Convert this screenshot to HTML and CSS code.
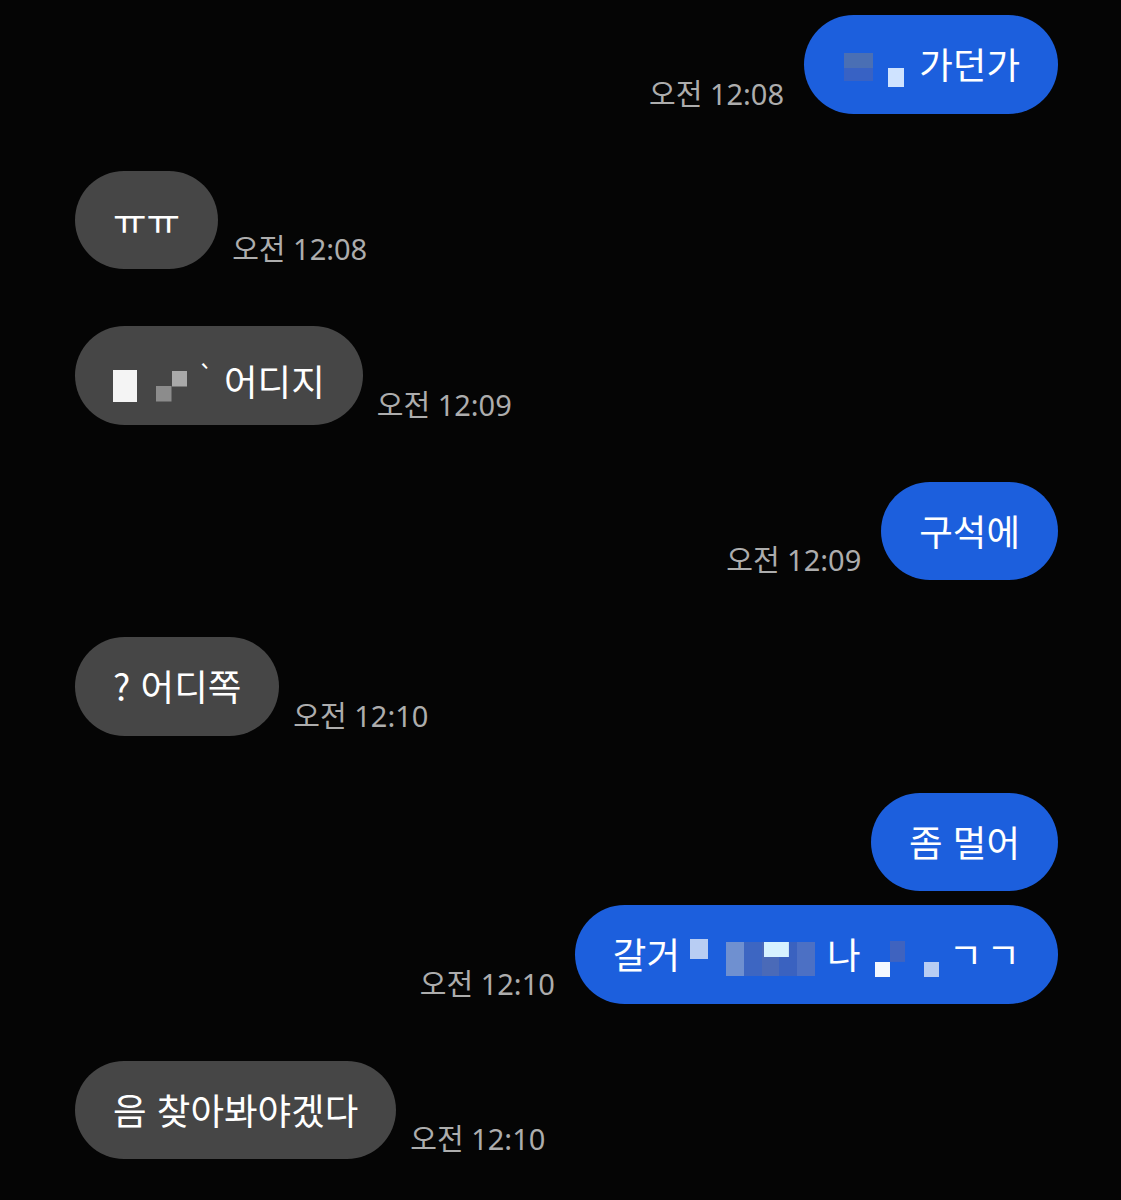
FILE: index.html
```html
<!DOCTYPE html>
<html lang="ko">
<head>
  <meta charset="UTF-8" />
  <meta name="viewport" content="width=device-width, initial-scale=1.0" />
  <title>Messages</title>
  <link rel="stylesheet" href="styles.css">
</head>
<body>
  <div class="chat">
    <div class="row sent">
      <span class="time">오전 12:08</span>
      <div class="bubble"><span class="mask m-slate"></span><span class="mask m-light"></span> 가던가</div>
    </div>

    <div class="row recv">
      <div class="bubble">ㅠㅠ</div>
      <span class="time">오전 12:08</span>
    </div>

    <div class="row recv">
      <div class="bubble"><span class="mask m-white"></span><span class="mask m-check"></span><span class="tick">`</span> 어디지</div>
      <span class="time">오전 12:09</span>
    </div>

    <div class="row sent">
      <span class="time">오전 12:09</span>
      <div class="bubble">구석에</div>
    </div>

    <div class="row recv">
      <div class="bubble">? 어디쪽</div>
      <span class="time">오전 12:10</span>
    </div>

    <div class="group">
      <div class="row sent">
        <div class="bubble">좀 멀어</div>
      </div>
      <div class="row sent">
        <span class="time">오전 12:10</span>
        <div class="bubble">갈거<span class="mask m-pale"></span><span class="mask m-strip"></span>나<span class="mask m-pair"></span><span class="mask m-pale small"></span> <span class="spaced">ㄱㄱ</span></div>
      </div>
    </div>

    <div class="row recv">
      <div class="bubble">음 찾아봐야겠다</div>
      <span class="time">오전 12:10</span>
    </div>
  </div>
</body>
</html>
```

FILE: styles.css
```css
body {
  margin: 0;
  background-color: #050505;
  font-family: "Noto Sans CJK KR", "Noto Sans", sans-serif;
}
.chat {
  display: flex;
  flex-direction: column;
  gap: 57px;
  padding: 15px 63px 40px 75px;
}
.group {
  display: flex;
  flex-direction: column;
  gap: 14px;
}
.row {
  display: flex;
  align-items: flex-end;
}
.row.sent {
  justify-content: flex-end;
  gap: 20px;
}
.row.recv {
  gap: 14px;
}
.bubble {
  height: 98.5px;
  line-height: 98px;
  padding: 0 38px;
  border-radius: 50px;
  font-size: 36.5px;
  color: #fff;
  white-space: nowrap;
  box-sizing: border-box;
}
.sent .bubble {
  background-color: #1c5fdd;
}
.recv .bubble {
  background-color: #464646;
}
.time {
  font-family: "Noto Sans", "Noto Sans CJK KR", sans-serif;
  font-size: 29px;
  color: #adadad;
  line-height: 1;
  margin-bottom: 6px;
  white-space: nowrap;
}
.spaced {
  letter-spacing: 4px;
  margin-right: -4px;
}
.mask {
  display: inline-block;
  vertical-align: middle;
}
.m-slate {
  width: 29px;
  height: 28px;
  margin: -4px 15px 0 2px;
  background: linear-gradient(#4a6fb4 0 55%, #3862c4 55% 100%);
}
.m-light {
  width: 16px;
  height: 19px;
  margin: 16px 5px 0 0;
  background-color: #cfe3ff;
}
.m-white {
  width: 24px;
  height: 32px;
  background-color: #f4f4f4;
  margin-right: 19px;
}
.m-check {
  width: 31px;
  height: 31px;
  background:
    linear-gradient(#a9a9a9, #a9a9a9) right top / 50% 50% no-repeat,
    linear-gradient(#8c8c8c, #8c8c8c) left bottom / 50% 50% no-repeat;
}
.tick {
  display: inline-block;
  margin-left: 11px;
  font-size: 26px;
  vertical-align: 10px;
}
.m-pale {
  width: 18px;
  height: 20px;
  margin: -20px 18px 0 10px;
  background-color: #b8cdf3;
}
.m-pale.small {
  width: 15px;
  height: 15px;
  margin: 20px 0 0 19px;
}
.m-strip {
  width: 89px;
  height: 34px;
  margin-right: 12px;
  background:
    linear-gradient(#d6f2ff, #d6f2ff) 60% top / 28% 45% no-repeat,
    linear-gradient(90deg, #6f90d0 0 20%, #3d66c2 20% 40%, #4a6ab8 40% 60%, #3a62c0 60% 80%, #4c70c4 80% 100%);
}
.m-pair {
  width: 30px;
  height: 36px;
  margin-left: 14px;
  background:
    linear-gradient(#f3f8ff, #f3f8ff) left bottom / 50% 42% no-repeat,
    linear-gradient(#3f63bf, #3f63bf) right top / 50% 58% no-repeat;
}
```
